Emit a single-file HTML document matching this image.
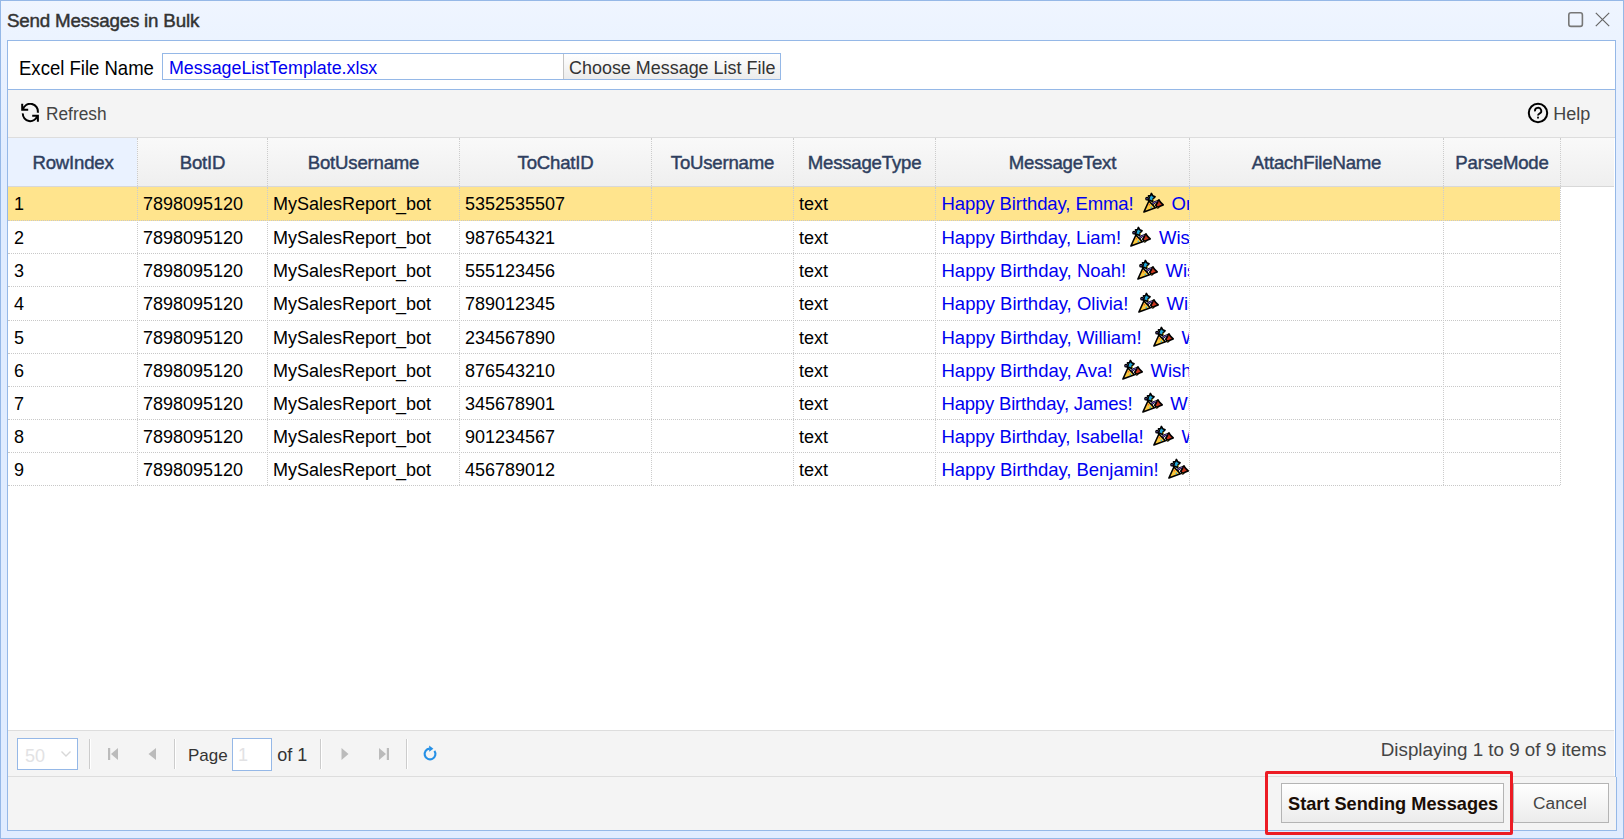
<!DOCTYPE html>
<html><head><meta charset="utf-8"><style>
html,body{margin:0;padding:0;}
body{width:1624px;height:839px;overflow:hidden;position:relative;background:#E0ECFF;font-family:"Liberation Sans",sans-serif;}
.t{position:absolute;white-space:nowrap;}
.b{position:absolute;box-sizing:border-box;}
.cell{position:absolute;overflow:hidden;white-space:nowrap;}
</style></head><body>
<div class="b" style="left:0px;top:0px;width:1624px;height:839px;border:1px solid #95B8E7;background:linear-gradient(to bottom,#EFF5FF 0,#E0ECFF 20%);"></div>
<div class="t " style="left:7px;top:12.09px;font-size:18.8px;line-height:18.8px;color:#333;-webkit-text-stroke:0.45px #333;letter-spacing:-0.2px;">Send Messages in Bulk</div>
<svg width="18" height="18" viewBox="0 0 18 18" style="position:absolute;left:1567px;top:11px"><rect x="1.8" y="1.8" width="13.6" height="13.6" rx="2.2" fill="none" stroke="#777" stroke-width="1.6"/></svg>
<svg width="18" height="18" viewBox="0 0 18 18" style="position:absolute;left:1594px;top:11px"><path d="M1.8 1.8 L15.2 15.2 M15.2 1.8 L1.8 15.2" stroke="#666" stroke-width="1.2"/></svg>
<div class="b" style="left:7px;top:40px;width:1609px;height:737px;border:1px solid #95B8E7;border-bottom:none;background:#fff;"></div>
<div class="b" style="left:8px;top:89px;width:1607px;height:1px;background:#95B8E7;"></div>
<div class="t " style="left:19px;top:58.16px;font-size:20.6px;line-height:20.6px;color:#000;transform:scaleX(0.9);transform-origin:0 0;">Excel File Name</div>
<div class="b" style="left:162px;top:53px;width:619px;height:27px;border:1px solid #95B8E7;background:#fff;"></div>
<div class="t " style="left:169px;top:59.69px;font-size:17.85px;line-height:17.85px;color:#0000F0;">MessageListTemplate.xlsx</div>
<div class="b" style="left:563px;top:54px;width:217px;height:25px;border-left:1px solid #c4c4c4;background:linear-gradient(to bottom,#ffffff 0,#ececec 100%);"></div>
<div class="t " style="left:569px;top:59.61px;font-size:17.95px;line-height:17.95px;color:#333;">Choose Message List File</div>
<div class="b" style="left:8px;top:90px;width:1607px;height:48px;background:#F4F4F4;border-bottom:1px solid #dddddd;"></div>
<svg width="21" height="21" viewBox="0 0 21 21" style="position:absolute;left:20px;top:103px">
<path d="M2.9 6.8 A7.4 7.4 0 0 1 17.7 9.8" fill="none" stroke="#000" stroke-width="2"/>
<path d="M2.2 0.8 V6.8 H8.2" fill="none" stroke="#000" stroke-width="2"/>
<path d="M2.8 10.4 A7.4 7.4 0 0 0 17.3 12.8" fill="none" stroke="#000" stroke-width="2"/>
<path d="M12.2 12.8 H17.9 V18.8" fill="none" stroke="#000" stroke-width="2"/>
</svg>
<div class="t " style="left:45.5px;top:104.69px;font-size:18.8px;line-height:18.8px;color:#444;transform:scaleX(0.92);transform-origin:0 0;">Refresh</div>
<svg width="22" height="22" viewBox="0 0 22 22" style="position:absolute;left:1527px;top:102px">
<circle cx="11" cy="11" r="9.2" fill="none" stroke="#000" stroke-width="2"/>
<path d="M8 9.3 A3.15 3.05 0 1 1 12.5 11.6 Q11 12.3 11 13.6" fill="none" stroke="#000" stroke-width="1.8"/>
<rect x="10.1" y="14.7" width="1.8" height="1.8" fill="#000"/>
</svg>
<div class="t " style="left:1553.3px;top:104.86px;font-size:18px;line-height:18px;color:#444;">Help</div>
<div class="b" style="left:8px;top:138px;width:1607px;height:49px;background:linear-gradient(to bottom,#F9F9F9 0,#EFEFEF 100%);border-bottom:1px solid #d8d8d8;"></div>
<div class="b" style="left:8px;top:138px;width:129px;height:48px;background:#EAF2FF;"></div>
<div class="t" style="left:-57.0px;width:260px;text-align:center;top:153.56px;font-size:18.6px;line-height:18.6px;color:#2f3f5f;-webkit-text-stroke:0.45px #2f3f5f;letter-spacing:-0.2px;">RowIndex</div>
<div class="t" style="left:72.5px;width:260px;text-align:center;top:153.56px;font-size:18.6px;line-height:18.6px;color:#2f3f5f;-webkit-text-stroke:0.45px #2f3f5f;letter-spacing:-0.2px;">BotID</div>
<div class="t" style="left:233.5px;width:260px;text-align:center;top:153.56px;font-size:18.6px;line-height:18.6px;color:#2f3f5f;-webkit-text-stroke:0.45px #2f3f5f;letter-spacing:-0.2px;">BotUsername</div>
<div class="t" style="left:425.5px;width:260px;text-align:center;top:153.56px;font-size:18.6px;line-height:18.6px;color:#2f3f5f;-webkit-text-stroke:0.45px #2f3f5f;letter-spacing:-0.2px;">ToChatID</div>
<div class="t" style="left:592.5px;width:260px;text-align:center;top:153.56px;font-size:18.6px;line-height:18.6px;color:#2f3f5f;-webkit-text-stroke:0.45px #2f3f5f;letter-spacing:-0.2px;">ToUsername</div>
<div class="t" style="left:734.5px;width:260px;text-align:center;top:153.56px;font-size:18.6px;line-height:18.6px;color:#2f3f5f;-webkit-text-stroke:0.45px #2f3f5f;letter-spacing:-0.2px;">MessageType</div>
<div class="t" style="left:932.5px;width:260px;text-align:center;top:153.56px;font-size:18.6px;line-height:18.6px;color:#2f3f5f;-webkit-text-stroke:0.45px #2f3f5f;letter-spacing:-0.2px;">MessageText</div>
<div class="t" style="left:1186.5px;width:260px;text-align:center;top:153.56px;font-size:18.6px;line-height:18.6px;color:#2f3f5f;-webkit-text-stroke:0.45px #2f3f5f;letter-spacing:-0.2px;">AttachFileName</div>
<div class="t" style="left:1372.0px;width:260px;text-align:center;top:153.56px;font-size:18.6px;line-height:18.6px;color:#2f3f5f;-webkit-text-stroke:0.45px #2f3f5f;letter-spacing:-0.2px;">ParseMode</div>
<div class="b" style="left:137px;top:138px;width:1px;height:48px;border-left:1px dotted #ccc;"></div>
<div class="b" style="left:267px;top:138px;width:1px;height:48px;border-left:1px dotted #ccc;"></div>
<div class="b" style="left:459px;top:138px;width:1px;height:48px;border-left:1px dotted #ccc;"></div>
<div class="b" style="left:651px;top:138px;width:1px;height:48px;border-left:1px dotted #ccc;"></div>
<div class="b" style="left:793px;top:138px;width:1px;height:48px;border-left:1px dotted #ccc;"></div>
<div class="b" style="left:935px;top:138px;width:1px;height:48px;border-left:1px dotted #ccc;"></div>
<div class="b" style="left:1189px;top:138px;width:1px;height:48px;border-left:1px dotted #ccc;"></div>
<div class="b" style="left:1443px;top:138px;width:1px;height:48px;border-left:1px dotted #ccc;"></div>
<div class="b" style="left:1560px;top:138px;width:1px;height:48px;border-left:1px dotted #ccc;"></div>
<div class="b" style="left:8px;top:187px;width:1552px;height:34px;background:#FFE48D;border-bottom:1px dotted #c8c8c8;"></div>
<div class="t " style="left:14px;top:195.06px;font-size:18px;line-height:18px;color:#000;">1</div>
<div class="t " style="left:143px;top:195.06px;font-size:18px;line-height:18px;color:#000;">7898095120</div>
<div class="t " style="left:273px;top:195.06px;font-size:18px;line-height:18px;color:#000;">MySalesReport_bot</div>
<div class="t " style="left:465px;top:195.06px;font-size:18px;line-height:18px;color:#000;">5352535507</div>
<div class="t " style="left:799px;top:195.06px;font-size:18px;line-height:18px;color:#000;">text</div>
<div class="cell" style="left:936px;top:187px;width:253px;height:33px;">
<div class="t" style="left:5.5px;top:7.64px;font-size:18.5px;line-height:18.5px;color:#0000F0;letter-spacing:-0.092px;">Happy Birthday, Emma!</div>
<svg width="28" height="28" viewBox="0 0 28 28" style="position:absolute;left:201.8px;top:2.1px">
<g stroke="#000" stroke-linejoin="round" stroke-linecap="round">
<path d="M13.4 4.4 L14.7 6.7 L17.1 7.8 L15.2 9.7 L14.6 12.4 L12.3 11.6 L10.3 11.1 L11.3 8.7 L10.4 6.9 L12.5 6.8 Z" fill="#22A8D8" stroke-width="1.6"/>
<circle cx="9" cy="9.7" r="1.25" fill="#7A5BC6" stroke-width="1.2"/>
<path d="M14.6 15 Q16.4 12.8 19.2 12.5" fill="none" stroke-width="2.7"/>
<path d="M21 10.8 L22.4 13.1 L25.2 15.9 L22.5 17 L19.6 18.5 L17.7 16.3 L19.4 13.7 L20 11.7 Z" fill="#C9361C" stroke-width="1.6"/>
<path d="M5.9 23 L10.9 12 L17.4 18.8 Z" fill="#FBC83A" stroke-width="1.6"/>
<rect x="19" y="17.8" width="1.7" height="1.2" fill="#D6C21E" stroke-width="1"/>
</g>
<path d="M14.6 15 Q16.4 12.8 19.2 12.5" fill="none" stroke="#7A5BC6" stroke-width="1.1"/>
<rect x="14.8" y="9.9" width="1" height="1.6" fill="#D6C21E"/>
<circle cx="11.3" cy="15.7" r="0.8" fill="#EE5A24"/>
<circle cx="13.3" cy="18.4" r="0.8" fill="#2FB4E2"/>
</svg>
<div class="t" style="left:235.5px;top:7.64px;font-size:18.5px;line-height:18.5px;color:#0000F0;">On your special day</div>
</div>
<div class="b" style="left:8px;top:221px;width:1552px;height:33px;background:#fff;border-bottom:1px dotted #c8c8c8;"></div>
<div class="t " style="left:14px;top:229.06px;font-size:18px;line-height:18px;color:#000;">2</div>
<div class="t " style="left:143px;top:229.06px;font-size:18px;line-height:18px;color:#000;">7898095120</div>
<div class="t " style="left:273px;top:229.06px;font-size:18px;line-height:18px;color:#000;">MySalesReport_bot</div>
<div class="t " style="left:465px;top:229.06px;font-size:18px;line-height:18px;color:#000;">987654321</div>
<div class="t " style="left:799px;top:229.06px;font-size:18px;line-height:18px;color:#000;">text</div>
<div class="cell" style="left:936px;top:221px;width:253px;height:32px;">
<div class="t" style="left:5.5px;top:7.64px;font-size:18.5px;line-height:18.5px;color:#0000F0;letter-spacing:-0.051px;">Happy Birthday, Liam!</div>
<svg width="28" height="28" viewBox="0 0 28 28" style="position:absolute;left:189.3px;top:2.1px">
<g stroke="#000" stroke-linejoin="round" stroke-linecap="round">
<path d="M13.4 4.4 L14.7 6.7 L17.1 7.8 L15.2 9.7 L14.6 12.4 L12.3 11.6 L10.3 11.1 L11.3 8.7 L10.4 6.9 L12.5 6.8 Z" fill="#22A8D8" stroke-width="1.6"/>
<circle cx="9" cy="9.7" r="1.25" fill="#7A5BC6" stroke-width="1.2"/>
<path d="M14.6 15 Q16.4 12.8 19.2 12.5" fill="none" stroke-width="2.7"/>
<path d="M21 10.8 L22.4 13.1 L25.2 15.9 L22.5 17 L19.6 18.5 L17.7 16.3 L19.4 13.7 L20 11.7 Z" fill="#C9361C" stroke-width="1.6"/>
<path d="M5.9 23 L10.9 12 L17.4 18.8 Z" fill="#FBC83A" stroke-width="1.6"/>
<rect x="19" y="17.8" width="1.7" height="1.2" fill="#D6C21E" stroke-width="1"/>
</g>
<path d="M14.6 15 Q16.4 12.8 19.2 12.5" fill="none" stroke="#7A5BC6" stroke-width="1.1"/>
<rect x="14.8" y="9.9" width="1" height="1.6" fill="#D6C21E"/>
<circle cx="11.3" cy="15.7" r="0.8" fill="#EE5A24"/>
<circle cx="13.3" cy="18.4" r="0.8" fill="#2FB4E2"/>
</svg>
<div class="t" style="left:223.0px;top:7.64px;font-size:18.5px;line-height:18.5px;color:#0000F0;">Wishing you</div>
</div>
<div class="b" style="left:8px;top:254px;width:1552px;height:33px;background:#fff;border-bottom:1px dotted #c8c8c8;"></div>
<div class="t " style="left:14px;top:262.06px;font-size:18px;line-height:18px;color:#000;">3</div>
<div class="t " style="left:143px;top:262.06px;font-size:18px;line-height:18px;color:#000;">7898095120</div>
<div class="t " style="left:273px;top:262.06px;font-size:18px;line-height:18px;color:#000;">MySalesReport_bot</div>
<div class="t " style="left:465px;top:262.06px;font-size:18px;line-height:18px;color:#000;">555123456</div>
<div class="t " style="left:799px;top:262.06px;font-size:18px;line-height:18px;color:#000;">text</div>
<div class="cell" style="left:936px;top:254px;width:253px;height:32px;">
<div class="t" style="left:5.5px;top:7.64px;font-size:18.5px;line-height:18.5px;color:#0000F0;letter-spacing:0.000px;">Happy Birthday, Noah!</div>
<svg width="28" height="28" viewBox="0 0 28 28" style="position:absolute;left:195.8px;top:2.1px">
<g stroke="#000" stroke-linejoin="round" stroke-linecap="round">
<path d="M13.4 4.4 L14.7 6.7 L17.1 7.8 L15.2 9.7 L14.6 12.4 L12.3 11.6 L10.3 11.1 L11.3 8.7 L10.4 6.9 L12.5 6.8 Z" fill="#22A8D8" stroke-width="1.6"/>
<circle cx="9" cy="9.7" r="1.25" fill="#7A5BC6" stroke-width="1.2"/>
<path d="M14.6 15 Q16.4 12.8 19.2 12.5" fill="none" stroke-width="2.7"/>
<path d="M21 10.8 L22.4 13.1 L25.2 15.9 L22.5 17 L19.6 18.5 L17.7 16.3 L19.4 13.7 L20 11.7 Z" fill="#C9361C" stroke-width="1.6"/>
<path d="M5.9 23 L10.9 12 L17.4 18.8 Z" fill="#FBC83A" stroke-width="1.6"/>
<rect x="19" y="17.8" width="1.7" height="1.2" fill="#D6C21E" stroke-width="1"/>
</g>
<path d="M14.6 15 Q16.4 12.8 19.2 12.5" fill="none" stroke="#7A5BC6" stroke-width="1.1"/>
<rect x="14.8" y="9.9" width="1" height="1.6" fill="#D6C21E"/>
<circle cx="11.3" cy="15.7" r="0.8" fill="#EE5A24"/>
<circle cx="13.3" cy="18.4" r="0.8" fill="#2FB4E2"/>
</svg>
<div class="t" style="left:229.5px;top:7.64px;font-size:18.5px;line-height:18.5px;color:#0000F0;">Wishing you</div>
</div>
<div class="b" style="left:8px;top:287px;width:1552px;height:34px;background:#fff;border-bottom:1px dotted #c8c8c8;"></div>
<div class="t " style="left:14px;top:295.06px;font-size:18px;line-height:18px;color:#000;">4</div>
<div class="t " style="left:143px;top:295.06px;font-size:18px;line-height:18px;color:#000;">7898095120</div>
<div class="t " style="left:273px;top:295.06px;font-size:18px;line-height:18px;color:#000;">MySalesReport_bot</div>
<div class="t " style="left:465px;top:295.06px;font-size:18px;line-height:18px;color:#000;">789012345</div>
<div class="t " style="left:799px;top:295.06px;font-size:18px;line-height:18px;color:#000;">text</div>
<div class="cell" style="left:936px;top:287px;width:253px;height:33px;">
<div class="t" style="left:5.5px;top:7.64px;font-size:18.5px;line-height:18.5px;color:#0000F0;letter-spacing:0.000px;">Happy Birthday, Olivia!</div>
<svg width="28" height="28" viewBox="0 0 28 28" style="position:absolute;left:196.8px;top:2.1px">
<g stroke="#000" stroke-linejoin="round" stroke-linecap="round">
<path d="M13.4 4.4 L14.7 6.7 L17.1 7.8 L15.2 9.7 L14.6 12.4 L12.3 11.6 L10.3 11.1 L11.3 8.7 L10.4 6.9 L12.5 6.8 Z" fill="#22A8D8" stroke-width="1.6"/>
<circle cx="9" cy="9.7" r="1.25" fill="#7A5BC6" stroke-width="1.2"/>
<path d="M14.6 15 Q16.4 12.8 19.2 12.5" fill="none" stroke-width="2.7"/>
<path d="M21 10.8 L22.4 13.1 L25.2 15.9 L22.5 17 L19.6 18.5 L17.7 16.3 L19.4 13.7 L20 11.7 Z" fill="#C9361C" stroke-width="1.6"/>
<path d="M5.9 23 L10.9 12 L17.4 18.8 Z" fill="#FBC83A" stroke-width="1.6"/>
<rect x="19" y="17.8" width="1.7" height="1.2" fill="#D6C21E" stroke-width="1"/>
</g>
<path d="M14.6 15 Q16.4 12.8 19.2 12.5" fill="none" stroke="#7A5BC6" stroke-width="1.1"/>
<rect x="14.8" y="9.9" width="1" height="1.6" fill="#D6C21E"/>
<circle cx="11.3" cy="15.7" r="0.8" fill="#EE5A24"/>
<circle cx="13.3" cy="18.4" r="0.8" fill="#2FB4E2"/>
</svg>
<div class="t" style="left:230.5px;top:7.64px;font-size:18.5px;line-height:18.5px;color:#0000F0;">Wishing you</div>
</div>
<div class="b" style="left:8px;top:321px;width:1552px;height:33px;background:#fff;border-bottom:1px dotted #c8c8c8;"></div>
<div class="t " style="left:14px;top:329.06px;font-size:18px;line-height:18px;color:#000;">5</div>
<div class="t " style="left:143px;top:329.06px;font-size:18px;line-height:18px;color:#000;">7898095120</div>
<div class="t " style="left:273px;top:329.06px;font-size:18px;line-height:18px;color:#000;">MySalesReport_bot</div>
<div class="t " style="left:465px;top:329.06px;font-size:18px;line-height:18px;color:#000;">234567890</div>
<div class="t " style="left:799px;top:329.06px;font-size:18px;line-height:18px;color:#000;">text</div>
<div class="cell" style="left:936px;top:321px;width:253px;height:32px;">
<div class="t" style="left:5.5px;top:7.64px;font-size:18.5px;line-height:18.5px;color:#0000F0;letter-spacing:0.000px;">Happy Birthday, William!</div>
<svg width="28" height="28" viewBox="0 0 28 28" style="position:absolute;left:211.8px;top:2.1px">
<g stroke="#000" stroke-linejoin="round" stroke-linecap="round">
<path d="M13.4 4.4 L14.7 6.7 L17.1 7.8 L15.2 9.7 L14.6 12.4 L12.3 11.6 L10.3 11.1 L11.3 8.7 L10.4 6.9 L12.5 6.8 Z" fill="#22A8D8" stroke-width="1.6"/>
<circle cx="9" cy="9.7" r="1.25" fill="#7A5BC6" stroke-width="1.2"/>
<path d="M14.6 15 Q16.4 12.8 19.2 12.5" fill="none" stroke-width="2.7"/>
<path d="M21 10.8 L22.4 13.1 L25.2 15.9 L22.5 17 L19.6 18.5 L17.7 16.3 L19.4 13.7 L20 11.7 Z" fill="#C9361C" stroke-width="1.6"/>
<path d="M5.9 23 L10.9 12 L17.4 18.8 Z" fill="#FBC83A" stroke-width="1.6"/>
<rect x="19" y="17.8" width="1.7" height="1.2" fill="#D6C21E" stroke-width="1"/>
</g>
<path d="M14.6 15 Q16.4 12.8 19.2 12.5" fill="none" stroke="#7A5BC6" stroke-width="1.1"/>
<rect x="14.8" y="9.9" width="1" height="1.6" fill="#D6C21E"/>
<circle cx="11.3" cy="15.7" r="0.8" fill="#EE5A24"/>
<circle cx="13.3" cy="18.4" r="0.8" fill="#2FB4E2"/>
</svg>
<div class="t" style="left:245.5px;top:7.64px;font-size:18.5px;line-height:18.5px;color:#0000F0;">Wishing you</div>
</div>
<div class="b" style="left:8px;top:354px;width:1552px;height:33px;background:#fff;border-bottom:1px dotted #c8c8c8;"></div>
<div class="t " style="left:14px;top:362.06px;font-size:18px;line-height:18px;color:#000;">6</div>
<div class="t " style="left:143px;top:362.06px;font-size:18px;line-height:18px;color:#000;">7898095120</div>
<div class="t " style="left:273px;top:362.06px;font-size:18px;line-height:18px;color:#000;">MySalesReport_bot</div>
<div class="t " style="left:465px;top:362.06px;font-size:18px;line-height:18px;color:#000;">876543210</div>
<div class="t " style="left:799px;top:362.06px;font-size:18px;line-height:18px;color:#000;">text</div>
<div class="cell" style="left:936px;top:354px;width:253px;height:32px;">
<div class="t" style="left:5.5px;top:7.64px;font-size:18.5px;line-height:18.5px;color:#0000F0;letter-spacing:-0.001px;">Happy Birthday, Ava!</div>
<svg width="28" height="28" viewBox="0 0 28 28" style="position:absolute;left:180.8px;top:2.1px">
<g stroke="#000" stroke-linejoin="round" stroke-linecap="round">
<path d="M13.4 4.4 L14.7 6.7 L17.1 7.8 L15.2 9.7 L14.6 12.4 L12.3 11.6 L10.3 11.1 L11.3 8.7 L10.4 6.9 L12.5 6.8 Z" fill="#22A8D8" stroke-width="1.6"/>
<circle cx="9" cy="9.7" r="1.25" fill="#7A5BC6" stroke-width="1.2"/>
<path d="M14.6 15 Q16.4 12.8 19.2 12.5" fill="none" stroke-width="2.7"/>
<path d="M21 10.8 L22.4 13.1 L25.2 15.9 L22.5 17 L19.6 18.5 L17.7 16.3 L19.4 13.7 L20 11.7 Z" fill="#C9361C" stroke-width="1.6"/>
<path d="M5.9 23 L10.9 12 L17.4 18.8 Z" fill="#FBC83A" stroke-width="1.6"/>
<rect x="19" y="17.8" width="1.7" height="1.2" fill="#D6C21E" stroke-width="1"/>
</g>
<path d="M14.6 15 Q16.4 12.8 19.2 12.5" fill="none" stroke="#7A5BC6" stroke-width="1.1"/>
<rect x="14.8" y="9.9" width="1" height="1.6" fill="#D6C21E"/>
<circle cx="11.3" cy="15.7" r="0.8" fill="#EE5A24"/>
<circle cx="13.3" cy="18.4" r="0.8" fill="#2FB4E2"/>
</svg>
<div class="t" style="left:214.5px;top:7.64px;font-size:18.5px;line-height:18.5px;color:#0000F0;">Wishing you</div>
</div>
<div class="b" style="left:8px;top:387px;width:1552px;height:33px;background:#fff;border-bottom:1px dotted #c8c8c8;"></div>
<div class="t " style="left:14px;top:395.06px;font-size:18px;line-height:18px;color:#000;">7</div>
<div class="t " style="left:143px;top:395.06px;font-size:18px;line-height:18px;color:#000;">7898095120</div>
<div class="t " style="left:273px;top:395.06px;font-size:18px;line-height:18px;color:#000;">MySalesReport_bot</div>
<div class="t " style="left:465px;top:395.06px;font-size:18px;line-height:18px;color:#000;">345678901</div>
<div class="t " style="left:799px;top:395.06px;font-size:18px;line-height:18px;color:#000;">text</div>
<div class="cell" style="left:936px;top:387px;width:253px;height:32px;">
<div class="t" style="left:5.5px;top:7.64px;font-size:18.5px;line-height:18.5px;color:#0000F0;letter-spacing:-0.189px;">Happy Birthday, James!</div>
<svg width="28" height="28" viewBox="0 0 28 28" style="position:absolute;left:200.6px;top:2.1px">
<g stroke="#000" stroke-linejoin="round" stroke-linecap="round">
<path d="M13.4 4.4 L14.7 6.7 L17.1 7.8 L15.2 9.7 L14.6 12.4 L12.3 11.6 L10.3 11.1 L11.3 8.7 L10.4 6.9 L12.5 6.8 Z" fill="#22A8D8" stroke-width="1.6"/>
<circle cx="9" cy="9.7" r="1.25" fill="#7A5BC6" stroke-width="1.2"/>
<path d="M14.6 15 Q16.4 12.8 19.2 12.5" fill="none" stroke-width="2.7"/>
<path d="M21 10.8 L22.4 13.1 L25.2 15.9 L22.5 17 L19.6 18.5 L17.7 16.3 L19.4 13.7 L20 11.7 Z" fill="#C9361C" stroke-width="1.6"/>
<path d="M5.9 23 L10.9 12 L17.4 18.8 Z" fill="#FBC83A" stroke-width="1.6"/>
<rect x="19" y="17.8" width="1.7" height="1.2" fill="#D6C21E" stroke-width="1"/>
</g>
<path d="M14.6 15 Q16.4 12.8 19.2 12.5" fill="none" stroke="#7A5BC6" stroke-width="1.1"/>
<rect x="14.8" y="9.9" width="1" height="1.6" fill="#D6C21E"/>
<circle cx="11.3" cy="15.7" r="0.8" fill="#EE5A24"/>
<circle cx="13.3" cy="18.4" r="0.8" fill="#2FB4E2"/>
</svg>
<div class="t" style="left:234.3px;top:7.64px;font-size:18.5px;line-height:18.5px;color:#0000F0;">Wishing you</div>
</div>
<div class="b" style="left:8px;top:420px;width:1552px;height:33px;background:#fff;border-bottom:1px dotted #c8c8c8;"></div>
<div class="t " style="left:14px;top:428.06px;font-size:18px;line-height:18px;color:#000;">8</div>
<div class="t " style="left:143px;top:428.06px;font-size:18px;line-height:18px;color:#000;">7898095120</div>
<div class="t " style="left:273px;top:428.06px;font-size:18px;line-height:18px;color:#000;">MySalesReport_bot</div>
<div class="t " style="left:465px;top:428.06px;font-size:18px;line-height:18px;color:#000;">901234567</div>
<div class="t " style="left:799px;top:428.06px;font-size:18px;line-height:18px;color:#000;">text</div>
<div class="cell" style="left:936px;top:420px;width:253px;height:32px;">
<div class="t" style="left:5.5px;top:7.64px;font-size:18.5px;line-height:18.5px;color:#0000F0;letter-spacing:-0.089px;">Happy Birthday, Isabella!</div>
<svg width="28" height="28" viewBox="0 0 28 28" style="position:absolute;left:211.8px;top:2.1px">
<g stroke="#000" stroke-linejoin="round" stroke-linecap="round">
<path d="M13.4 4.4 L14.7 6.7 L17.1 7.8 L15.2 9.7 L14.6 12.4 L12.3 11.6 L10.3 11.1 L11.3 8.7 L10.4 6.9 L12.5 6.8 Z" fill="#22A8D8" stroke-width="1.6"/>
<circle cx="9" cy="9.7" r="1.25" fill="#7A5BC6" stroke-width="1.2"/>
<path d="M14.6 15 Q16.4 12.8 19.2 12.5" fill="none" stroke-width="2.7"/>
<path d="M21 10.8 L22.4 13.1 L25.2 15.9 L22.5 17 L19.6 18.5 L17.7 16.3 L19.4 13.7 L20 11.7 Z" fill="#C9361C" stroke-width="1.6"/>
<path d="M5.9 23 L10.9 12 L17.4 18.8 Z" fill="#FBC83A" stroke-width="1.6"/>
<rect x="19" y="17.8" width="1.7" height="1.2" fill="#D6C21E" stroke-width="1"/>
</g>
<path d="M14.6 15 Q16.4 12.8 19.2 12.5" fill="none" stroke="#7A5BC6" stroke-width="1.1"/>
<rect x="14.8" y="9.9" width="1" height="1.6" fill="#D6C21E"/>
<circle cx="11.3" cy="15.7" r="0.8" fill="#EE5A24"/>
<circle cx="13.3" cy="18.4" r="0.8" fill="#2FB4E2"/>
</svg>
<div class="t" style="left:245.5px;top:7.64px;font-size:18.5px;line-height:18.5px;color:#0000F0;">Wishing you</div>
</div>
<div class="b" style="left:8px;top:453px;width:1552px;height:33px;background:#fff;border-bottom:1px dotted #c8c8c8;"></div>
<div class="t " style="left:14px;top:461.06px;font-size:18px;line-height:18px;color:#000;">9</div>
<div class="t " style="left:143px;top:461.06px;font-size:18px;line-height:18px;color:#000;">7898095120</div>
<div class="t " style="left:273px;top:461.06px;font-size:18px;line-height:18px;color:#000;">MySalesReport_bot</div>
<div class="t " style="left:465px;top:461.06px;font-size:18px;line-height:18px;color:#000;">456789012</div>
<div class="t " style="left:799px;top:461.06px;font-size:18px;line-height:18px;color:#000;">text</div>
<div class="cell" style="left:936px;top:453px;width:253px;height:32px;">
<div class="t" style="left:5.5px;top:7.64px;font-size:18.5px;line-height:18.5px;color:#0000F0;letter-spacing:-0.023px;">Happy Birthday, Benjamin!</div>
<svg width="28" height="28" viewBox="0 0 28 28" style="position:absolute;left:226.8px;top:2.1px">
<g stroke="#000" stroke-linejoin="round" stroke-linecap="round">
<path d="M13.4 4.4 L14.7 6.7 L17.1 7.8 L15.2 9.7 L14.6 12.4 L12.3 11.6 L10.3 11.1 L11.3 8.7 L10.4 6.9 L12.5 6.8 Z" fill="#22A8D8" stroke-width="1.6"/>
<circle cx="9" cy="9.7" r="1.25" fill="#7A5BC6" stroke-width="1.2"/>
<path d="M14.6 15 Q16.4 12.8 19.2 12.5" fill="none" stroke-width="2.7"/>
<path d="M21 10.8 L22.4 13.1 L25.2 15.9 L22.5 17 L19.6 18.5 L17.7 16.3 L19.4 13.7 L20 11.7 Z" fill="#C9361C" stroke-width="1.6"/>
<path d="M5.9 23 L10.9 12 L17.4 18.8 Z" fill="#FBC83A" stroke-width="1.6"/>
<rect x="19" y="17.8" width="1.7" height="1.2" fill="#D6C21E" stroke-width="1"/>
</g>
<path d="M14.6 15 Q16.4 12.8 19.2 12.5" fill="none" stroke="#7A5BC6" stroke-width="1.1"/>
<rect x="14.8" y="9.9" width="1" height="1.6" fill="#D6C21E"/>
<circle cx="11.3" cy="15.7" r="0.8" fill="#EE5A24"/>
<circle cx="13.3" cy="18.4" r="0.8" fill="#2FB4E2"/>
</svg>
<div class="t" style="left:260.5px;top:7.64px;font-size:18.5px;line-height:18.5px;color:#0000F0;">Wishing you</div>
</div>
<div class="b" style="left:137px;top:187px;width:1px;height:298px;border-left:1px dotted #ccc;"></div>
<div class="b" style="left:267px;top:187px;width:1px;height:298px;border-left:1px dotted #ccc;"></div>
<div class="b" style="left:459px;top:187px;width:1px;height:298px;border-left:1px dotted #ccc;"></div>
<div class="b" style="left:651px;top:187px;width:1px;height:298px;border-left:1px dotted #ccc;"></div>
<div class="b" style="left:793px;top:187px;width:1px;height:298px;border-left:1px dotted #ccc;"></div>
<div class="b" style="left:935px;top:187px;width:1px;height:298px;border-left:1px dotted #ccc;"></div>
<div class="b" style="left:1189px;top:187px;width:1px;height:298px;border-left:1px dotted #ccc;"></div>
<div class="b" style="left:1443px;top:187px;width:1px;height:298px;border-left:1px dotted #ccc;"></div>
<div class="b" style="left:1560px;top:187px;width:1px;height:298px;border-left:1px dotted #ccc;"></div>
<div class="b" style="left:8px;top:730px;width:1607px;height:47px;background:#F4F4F4;border-top:1px solid #dddddd;border-bottom:1px solid #dddddd;"></div>
<div class="b" style="left:17px;top:738px;width:61px;height:32px;border:1px solid #95B8E7;background:#fff;"></div>
<div class="t " style="left:25px;top:746.76px;font-size:18px;line-height:18px;color:#e2e2e4;">50</div>
<svg width="12" height="8" viewBox="0 0 12 8" style="position:absolute;left:60px;top:750px"><path d="M1.5 1.5 L6 6 L10.5 1.5" fill="none" stroke="#d8d8d8" stroke-width="1.4"/></svg>
<div class="b" style="left:89px;top:739px;width:2px;height:30px;border-left:1px solid #cccccc;border-right:1px solid #ffffff;"></div>
<div class="b" style="left:174px;top:739px;width:2px;height:30px;border-left:1px solid #cccccc;border-right:1px solid #ffffff;"></div>
<div class="b" style="left:320px;top:739px;width:2px;height:30px;border-left:1px solid #cccccc;border-right:1px solid #ffffff;"></div>
<div class="b" style="left:406px;top:739px;width:2px;height:30px;border-left:1px solid #cccccc;border-right:1px solid #ffffff;"></div>
<svg width="12" height="14" viewBox="0 0 12 14" style="position:absolute;left:107px;top:747px"><rect x="1" y="1" width="2.2" height="12" fill="#bbb"/><path d="M11 1 L4 7 L11 13 Z" fill="#bbb"/></svg>
<svg width="10" height="14" viewBox="0 0 10 14" style="position:absolute;left:147px;top:747px"><path d="M9 1 L1.5 7 L9 13 Z" fill="#bbb"/></svg>
<svg width="10" height="14" viewBox="0 0 10 14" style="position:absolute;left:340px;top:747px"><path d="M1.5 1 L8.5 7 L1.5 13 Z" fill="#bbb"/></svg>
<svg width="12" height="14" viewBox="0 0 12 14" style="position:absolute;left:378px;top:747px"><path d="M1 1 L8 7 L1 13 Z" fill="#bbb"/><rect x="8.8" y="1" width="2.2" height="12" fill="#bbb"/></svg>
<div class="t " style="left:188px;top:747.21px;font-size:17px;line-height:17px;color:#333;">Page</div>
<div class="b" style="left:232px;top:738px;width:40px;height:33px;border:1px solid #95B8E7;background:#fff;"></div>
<div class="t " style="left:238px;top:746.36px;font-size:18px;line-height:18px;color:#e2e2e4;">1</div>
<div class="t " style="left:277.3px;top:746.36px;font-size:18px;line-height:18px;color:#333;">of 1</div>
<svg width="18" height="18" viewBox="0 0 18 18" style="position:absolute;left:421px;top:744px">
<path d="M13.4 6.8 A5.4 5.4 0 1 1 8.6 4.6" fill="none" stroke="#2590E6" stroke-width="2.1"/>
<path d="M8.2 1.4 L12.4 4.7 L8.2 7.8 Z" fill="#2590E6"/>
</svg>
<div class="t" style="left:1006.3px;width:600px;text-align:right;top:740.59px;font-size:18.8px;line-height:18.8px;color:#444;">Displaying 1 to 9 of 9 items</div>
<div class="b" style="left:7px;top:777px;width:1610px;height:54px;background:#F4F4F4;border:1px solid #95B8E7;border-top:none;"></div>
<div class="b" style="left:1614px;top:138px;width:1px;height:638px;background:#fff;"></div>
<div class="b" style="left:1281px;top:783px;width:223px;height:40px;border:1px solid #b4b4b4;background:linear-gradient(to bottom,#ffffff 0,#ececec 100%);"></div>
<div class="t " style="left:1288px;top:794.59px;font-size:18.2px;line-height:18.2px;color:#1a0d05;font-weight:bold;">Start Sending Messages</div>
<div class="b" style="left:1513px;top:783px;width:96px;height:40px;border:1px solid #b4b4b4;background:linear-gradient(to bottom,#ffffff 0,#ececec 100%);"></div>
<div class="t" style="left:1512.0px;width:96px;text-align:center;top:795.16px;font-size:17.3px;line-height:17.3px;color:#444;">Cancel</div>
<div class="b" style="left:1265px;top:771px;width:248px;height:64px;border:3px solid #EC1C24;border-radius:2px;"></div>
</body></html>
